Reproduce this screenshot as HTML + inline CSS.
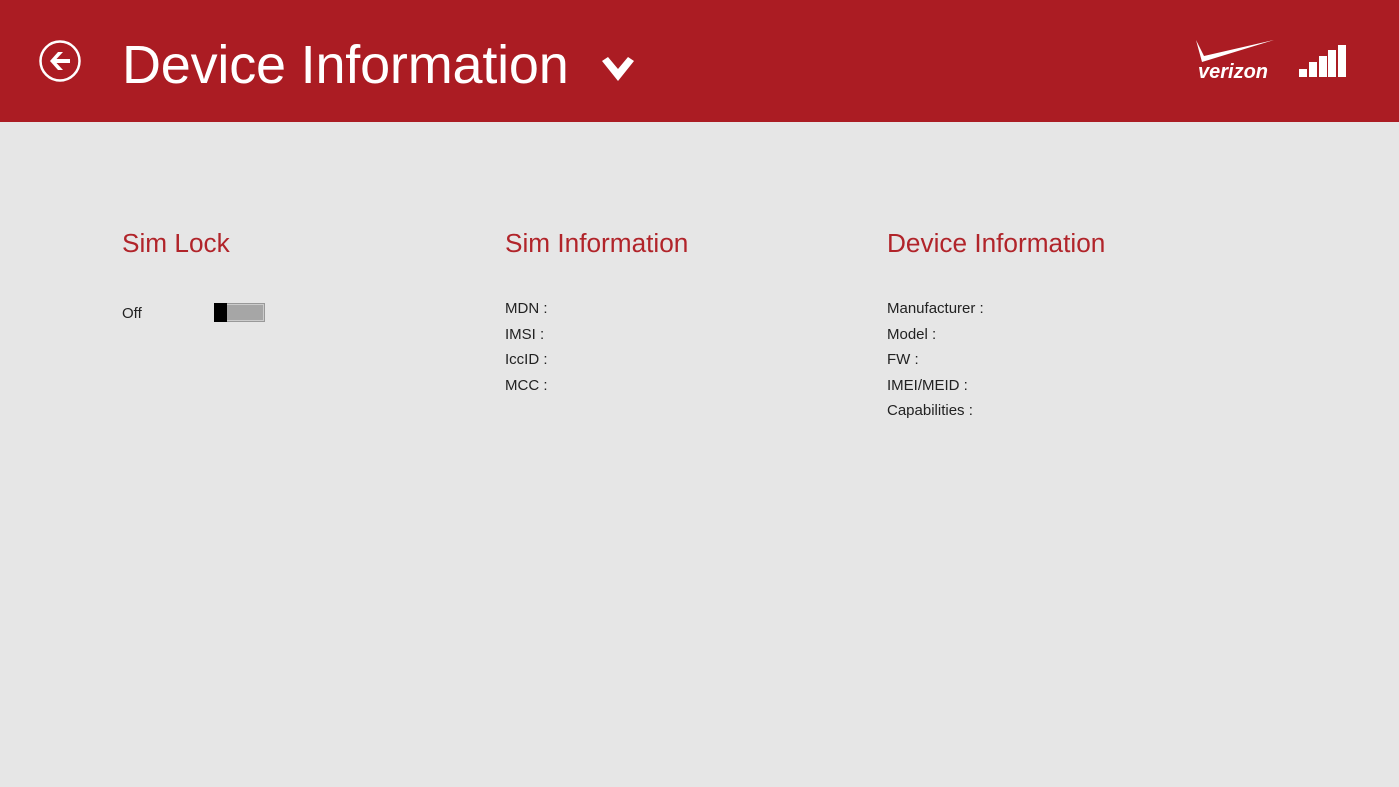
<!DOCTYPE html>
<html><head><style>
body{margin:0;width:1399px;height:787px;background:#e6e6e6;font-family:"Liberation Sans",sans-serif;overflow:hidden;position:relative}
.hdr{position:absolute;left:0;top:0;width:1399px;height:122px;background:#ab1c23}
.t{position:absolute;color:#fff;font-size:54px;left:122px;top:34px;letter-spacing:-0.2px;font-weight:300}
.h2{position:absolute;color:#b1242a;font-size:26.2px;top:228px}
.l{position:absolute;color:#222;font-size:15px}
</style></head><body>
<div class="hdr">
<svg style="position:absolute;left:39px;top:40px" width="44" height="44"><circle cx="21" cy="21" r="19.5" fill="none" stroke="#fff" stroke-width="2.5"/><path d="M11 21 L19 12 L24 12 L17.5 19 H31 V23 H17.5 L24 30 L19 30 Z" fill="#fff"/></svg>
<div class="t">Device Information</div>
<svg style="position:absolute;left:602px;top:57px" width="32" height="26"><path d="M0 4 L6 0 L16 12 L26 0 L32 4 L16 24 Z" fill="#fff"/></svg>
<svg style="position:absolute;left:1194px;top:36px" width="82" height="48"><path d="M2 4 L8 26 L80 4 L10 20 Z" fill="#fff"/><text x="4" y="42" fill="#fff" font-size="20" font-weight="bold" font-style="italic" font-family="Liberation Sans">verizon</text></svg>
<div style="position:absolute;left:1299px;top:69px;width:8px;height:8px;background:#fff"></div>
<div style="position:absolute;left:1309px;top:62px;width:8px;height:15px;background:#fff"></div>
<div style="position:absolute;left:1319px;top:56px;width:8px;height:21px;background:#fff"></div>
<div style="position:absolute;left:1328px;top:50px;width:8px;height:27px;background:#fff"></div>
<div style="position:absolute;left:1338px;top:45px;width:8px;height:32px;background:#fff"></div>
</div>
<div class="h2" style="left:122px">Sim Lock</div>
<div class="h2" style="left:505px">Sim Information</div>
<div class="h2" style="left:887px">Device Information</div>
<div class="l" style="left:122px;top:305px">Off</div>
<div style="position:absolute;left:214px;top:303px;width:51px;height:19px;border:1px solid #999;background:#a6a6a6;box-sizing:border-box;box-shadow:inset 0 0 0 1px #ccc"></div>
<div style="position:absolute;left:214px;top:303px;width:13px;height:19px;background:#000"></div>
<div class="l" style="left:505px;top:300px">MDN :</div>
<div class="l" style="left:505px;top:326px">IMSI :</div>
<div class="l" style="left:505px;top:351px">IccID :</div>
<div class="l" style="left:505px;top:377px">MCC :</div>
<div class="l" style="left:887px;top:300px">Manufacturer :</div>
<div class="l" style="left:887px;top:326px">Model :</div>
<div class="l" style="left:887px;top:351px">FW :</div>
<div class="l" style="left:887px;top:377px">IMEI/MEID :</div>
<div class="l" style="left:887px;top:402px">Capabilities :</div>
</body></html>
